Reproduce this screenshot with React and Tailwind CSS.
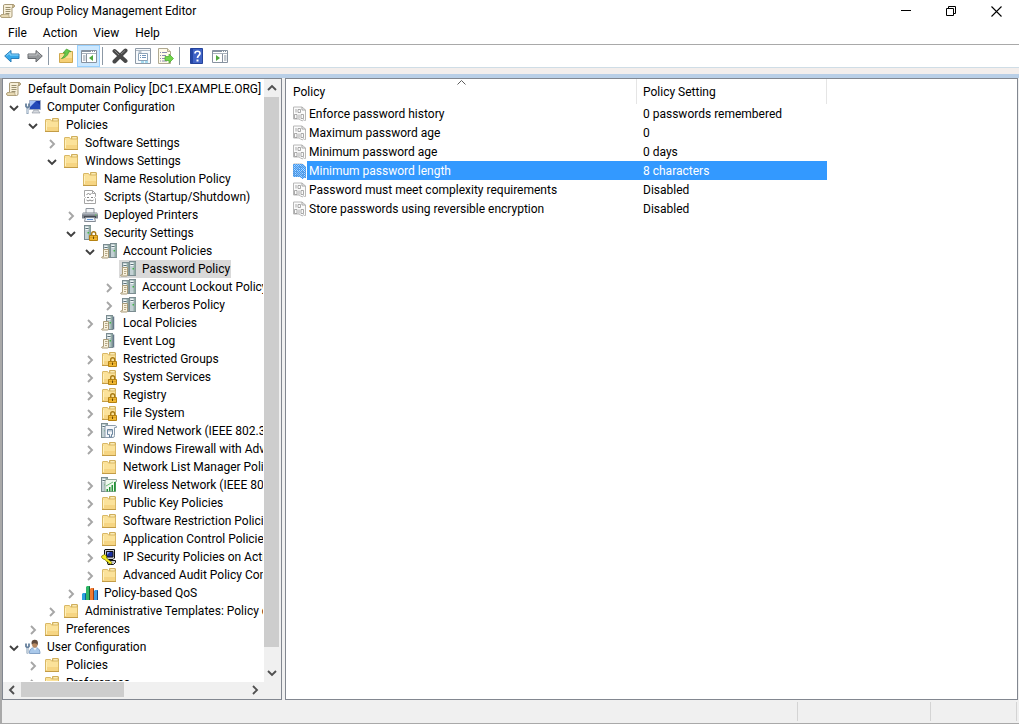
import React from "react";

const svgProps = { width: 16, height: 16, viewBox: "0 0 16 16", "aria-hidden": true, className: "block shrink-0" };

function ScrollIcon() {
  return (
    <svg {...svgProps}>
      <path d="M4.500 1.500h8.500q1.500.3 1.500 1.500T13 4.500h-1v8.500q0 1.500-1.500 1.500H2Q.5 14 .5 13T2 11.500h1.500V3q0-1.500 1-1.500z" fill="#f7efd8" stroke="#a89a78" />
      <path d="M12.500 1.500q2 .3 2 1.500t-2 1.500z" fill="#d5c397" stroke="#a3926c" strokeWidth=".6" />
      <path d="M2 11.500h7q-.8 1.500.7 3H2q-1.500-.5-1.500-1.500T2 11.500z" fill="#e6d8b2" stroke="#a3926c" strokeWidth=".6" />
      <path d="M5.500 4.500h5M5.500 6.500h5M5.500 8.500h5M5.500 10.500h4" stroke="#9a9070" strokeWidth="1" />
    </svg>
  );
}

function Folder() {
  return (
    <g>
      <path d="M8.500 1.500h5.500q.5 0 .5.500v11h-6z" fill="#f3dc91" stroke="#cfae5d" />
      <path d="M10 2.500h3v1h-3z" fill="#fff8dc" />
      <path d="M1.500 3q0-.5.5-.5h4.500l1 1.500h6.500q.5 0 .5.500v9.500q0 .5-.5.500h-12q-.5 0-.5-.5z" fill="#fbe29a" stroke="#d9b866" />
      <path d="M2 10h12v4H2z" fill="#f6d583" />
      <path d="M2.500 5v8" stroke="#fff1bd" />
      <path d="M1 14.500h14" stroke="#c39c46" />
    </g>
  );
}

function FolderIcon() {
  return <svg {...svgProps}><Folder /></svg>;
}

function Lock() {
  return (
    <g>
      <path d="M9.700 10V8.800a2 2 0 0 1 4 0V10" fill="none" stroke="#a87a14" strokeWidth="1.400" />
      <path d="M7.500 10.500h8v5h-8z" fill="#f0b833" stroke="#b58212" />
      <path d="M8 12.500h7" stroke="#d49a20" strokeWidth=".7" />
      <path d="M11 11.500h1v2.500h-1z" fill="#6b4a06" />
    </g>
  );
}

function FolderLockIcon() {
  return <svg {...svgProps}><Folder /><Lock /></svg>;
}

function Tower({ x = 0, y = 0, h = 13 }) {
  return (
    <g>
      <rect x={x + 0.5} y={y + 0.5} width="6" height={h} fill="#c3d1d4" stroke="#7b8c91" />
      <rect x={x + 4.5} y={y + 1} width="2" height={h - 1} fill="#93aca6" />
      <path d={`M${x + 1.5} ${y + 2.5}h3M${x + 1.5} ${y + 4.5}h3`} stroke="#f3f8f9" />
      <path d={`M${x + 1.5} ${y + 3.5}h3`} stroke="#5c7079" />
      <rect x={x + 3.5} y={y + 7} width="1.500" height="1.500" fill="#43b649" />
    </g>
  );
}

function Sheet() {
  return (
    <g>
      <path d="M2.500 6.500h5v7.500q0 1-1 1H1q-1-1 .5-1.500h1z" fill="#f9f2df" stroke="#a89a78" />
      <path d="M4 8.500h2.500M4 10.500h2.500M4 12.500h2" stroke="#a5966e" strokeWidth=".8" />
    </g>
  );
}

function ServersSheetIcon() {
  return <svg {...svgProps}><Tower x={2} y={1} h={13} /><Tower x={9} y={0} h={14} /><Sheet /></svg>;
}

function ServerSheetIcon() {
  return <svg {...svgProps}><Tower x={5} y={0} h={14} /><path d="M12.500 1.500v13" stroke="#65778a" strokeWidth="1.500" /><Sheet /></svg>;
}

function ServerLockIcon() {
  return <svg {...svgProps}><Tower x={2} y={0} h={14} /><Lock /></svg>;
}

function ComputerIcon() {
  return (
    <svg {...svgProps}>
      <path d="M4.500 1.500h11v9h-11z" fill="#2449b8" stroke="#a3aec6" />
      <path d="M5 2h6L5 8z" fill="#a7c2f5" />
      <path d="M11 2h4v4z" fill="#1733a0" />
      <path d="M9 11h4l2 3H7z" fill="#d5d9de" stroke="#8a929e" strokeWidth=".6" />
      <path d="M1 4.500v3L2.500 9 4 7.500v-3M2.500 8.500v6.500" fill="none" stroke="#66809d" strokeWidth="1.800" />
      <path d="M2.500 9.500v5" stroke="#e7f1fa" strokeWidth=".7" />
    </svg>
  );
}

function UserIcon() {
  return (
    <svg {...svgProps}>
      <path d="M4.500 14.500c-.5-4 2-6 5.500-6s5 2.500 5 6z" fill="#a9c8ea" stroke="#6e92bb" strokeWidth=".8" />
      <path d="M8 8.500l2 3 2-3z" fill="#eff6fc" />
      <ellipse cx="9.800" cy="5" rx="2.800" ry="3.800" fill="#b88a63" />
      <path d="M6.700 5.500C6 1.500 8 .8 10 .8c3 .3 3.300 2.500 2.500 5.500C12 4 9 3.500 6.700 5.500z" fill="#604b3d" />
      <path d="M1 4.500v3L2.500 9 4 7.500v-3M2.500 8.500v6" fill="none" stroke="#66809d" strokeWidth="1.800" />
      <path d="M2.500 9v5" stroke="#e2eef8" strokeWidth=".7" />
    </svg>
  );
}

function ScriptIcon() {
  return (
    <svg {...svgProps}>
      <path d="M2.500 1.500h8l3 3v3l-1 1 1 1v5h-11v-5l1-1-1-1z" fill="#fff" stroke="#a5a5a5" />
      <path d="M10.500 1.500v3h3" fill="none" stroke="#a5a5a5" />
      <path d="M4.500 5.500l2-1 1.500 1 1.500-1M5 8.500h2M9 8.500h2M4.500 11l1.500 1 2-1 2 1 1.500-1" fill="none" stroke="#777" strokeWidth=".9" />
    </svg>
  );
}

function PrinterIcon() {
  return (
    <svg {...svgProps}>
      <path d="M4 1.500h8v5H4z" fill="#f3f5f7" stroke="#8f969f" />
      <path d="M1 5.500h14l1 2v4H0v-4z" fill="#7d838c" />
      <path d="M1 6h14l.7 1.500H.3z" fill="#aeb4bc" />
      <path d="M2 9h12v2H2z" fill="#454a52" />
      <path d="M3.500 10.500h9l1 4h-11z" fill="#eef3fb" stroke="#858c95" />
      <path d="M5 12.500h6" stroke="#5c93d6" />
      <path d="M13 8h1.500" stroke="#65cf5b" />
    </svg>
  );
}

function WiredIcon() {
  return (
    <svg {...svgProps}>
      <Tower x={0} y={0} h={14} />
      <path d="M5 2.500h9.500q1 0 1 2h-2v8q0 2-1.500 2H4V4q0-1.500 1-1.500z" fill="#f4f7fa" stroke="#8c9cac" />
      <path d="M6.500 6.500v5h2v2.500h2v-2.500h1v-5zM8 6.500v2M10 6.500v2" fill="none" stroke="#5f7b96" strokeWidth=".9" />
    </svg>
  );
}

function WirelessIcon() {
  return (
    <svg {...svgProps}>
      <Tower x={0} y={0} h={14} />
      <path d="M5 2.500h10.500v2h-1v10H4V4z" fill="#eff8ee" stroke="#93a89c" />
      <path d="M5.500 12h1.500v2.500H5.500zM8 10h1.500v4.500H8zM10.500 8h1.500v6.500h-1.500zM13 5h1.700v9.500H13z" fill="#249338" />
      <path d="M5 9l7-4" fill="none" stroke="#6dbb78" />
    </svg>
  );
}

function IpSecIcon() {
  return (
    <svg {...svgProps}>
      <path d="M4 .5h9.500V9L12 10.500H5L3.500 9V1z" fill="#cfd0d8" stroke="#111" />
      <path d="M5.500 2.500h6.500v5.500H5.500z" fill="#1b2f9e" stroke="#111" />
      <path d="M6 3h3L6 6z" fill="#7f9cf0" />
      <path d="M6 11.500h8.500v2l-2 2H7z" fill="#c9cad2" stroke="#111" />
      <path d="M.7 7l2.800-1.500 2 1.500v2l5.500 4.500-1 1.700-2-.7-1-1.500-1.500-.5L4 10.500l-2-.5L.7 8.500z" fill="#f6ee21" stroke="#6a6500" strokeWidth=".7" />
    </svg>
  );
}

function QosIcon() {
  return (
    <svg {...svgProps}>
      <path d="M0 9l1-1h3v7H0z" fill="#2aa3df" /><path d="M3 9l1-1v7H3z" fill="#125c9c" />
      <path d="M4 2l1-1h3v14H4z" fill="#2eb867" /><path d="M7 2l1-1v14H7z" fill="#126034" />
      <path d="M8 4l1-1h3v12H8z" fill="#f07a2f" /><path d="M11 4l1-1v12h-1z" fill="#9b3a12" />
      <path d="M12 6l1-1h3v10h-4z" fill="#3e9ae0" /><path d="M15 6l1-1v10h-1z" fill="#154a8a" />
    </svg>
  );
}

function PolicyIcon({ selected }) {
  return (
    <svg width="14" height="16" viewBox="0 0 14 16" aria-hidden="true" className="block shrink-0">
      <defs>
        <pattern id="dither" width="2" height="2" patternUnits="userSpaceOnUse">
          <path d="M0 0h1v1H0zM1 1h1v1H1z" fill="#3399ff" />
        </pattern>
      </defs>
      <path d="M.5 1h8.500l3.500 3v10.500h-1l-1-1-1 1.500-2-1-1.500-1h-5.500z" fill="#fbfbfb" stroke="#b8b8b8" />
      <path d="M9 1v3h3.500" fill="none" stroke="#a5a5a5" />
      <path d="M3 3v3.500M5 3.500h2.500v3H5zM1.500 8.500h2.500v4H1.500zM6 8.500v4M8 8.500h2.500v4H8z" fill="none" stroke="#959595" strokeWidth=".8" />
      {selected && <path d="M0 1h10l3 3v11h-2l-1 1-3-2H0z" fill="#3399ff" fillOpacity=".35" />}
      {selected && <path d="M0 1h10l3 3v11h-2l-1 1-3-2H0z" fill="url(#dither)" shapeRendering="crispEdges" />}
    </svg>
  );
}

function Chevron({ dir, className }) {
  const d = { down: "M1 3l4 4 4-4", right: "M3 1l4 4-4 4", up: "M1 7l4-4 4 4", left: "M7 1L3 5l4 4" };
  return (
    <svg width="10" height="10" viewBox="0 0 10 10" aria-hidden="true" className={"block " + className}>
      <path d={d[dir]} fill="none" stroke="currentColor" strokeWidth="1.900" />
    </svg>
  );
}

const tree = [
  [0, "", ScrollIcon, "Default Domain Policy [DC1.EXAMPLE.ORG]"],
  [1, "open", ComputerIcon, "Computer Configuration"],
  [2, "open", FolderIcon, "Policies"],
  [3, "closed", FolderIcon, "Software Settings"],
  [3, "open", FolderIcon, "Windows Settings"],
  [4, "", FolderIcon, "Name Resolution Policy"],
  [4, "", ScriptIcon, "Scripts (Startup/Shutdown)"],
  [4, "closed", PrinterIcon, "Deployed Printers"],
  [4, "open", ServerLockIcon, "Security Settings"],
  [5, "open", ServersSheetIcon, "Account Policies"],
  [6, "", ServersSheetIcon, "Password Policy"],
  [6, "closed", ServersSheetIcon, "Account Lockout Policy"],
  [6, "closed", ServersSheetIcon, "Kerberos Policy"],
  [5, "closed", ServerSheetIcon, "Local Policies"],
  [5, "", ServerSheetIcon, "Event Log"],
  [5, "closed", FolderLockIcon, "Restricted Groups"],
  [5, "closed", FolderLockIcon, "System Services"],
  [5, "closed", FolderLockIcon, "Registry"],
  [5, "closed", FolderLockIcon, "File System"],
  [5, "closed", WiredIcon, "Wired Network (IEEE 802.3) Policies"],
  [5, "closed", FolderIcon, "Windows Firewall with Advanced Security"],
  [5, "", FolderIcon, "Network List Manager Policies"],
  [5, "closed", WirelessIcon, "Wireless Network (IEEE 802.11) Policies"],
  [5, "closed", FolderIcon, "Public Key Policies"],
  [5, "closed", FolderIcon, "Software Restriction Policies"],
  [5, "closed", FolderIcon, "Application Control Policies"],
  [5, "closed", IpSecIcon, "IP Security Policies on Active Directory"],
  [5, "closed", FolderIcon, "Advanced Audit Policy Configuration"],
  [4, "closed", QosIcon, "Policy-based QoS"],
  [3, "closed", FolderIcon, "Administrative Templates: Policy definitions"],
  [2, "closed", FolderIcon, "Preferences"],
  [1, "open", UserIcon, "User Configuration"],
  [2, "closed", FolderIcon, "Policies"],
  [2, "closed", FolderIcon, "Preferences"],
];

const policies = [
  ["Enforce password history", "0 passwords remembered"],
  ["Maximum password age", "0"],
  ["Minimum password age", "0 days"],
  ["Minimum password length", "8 characters"],
  ["Password must meet complexity requirements", "Disabled"],
  ["Store passwords using reversible encryption", "Disabled"],
];

function TreeRow({ depth, state, Icon, label }) {
  const selected = label === "Password Policy";
  return (
    <li
      role="treeitem"
      aria-level={depth + 1}
      aria-selected={selected}
      aria-expanded={state ? state === "open" : undefined}
      className="flex h-[18px] items-center whitespace-nowrap"
      style={{ paddingLeft: depth ? depth * 19 - 18 : 2 }}
    >
      {depth > 0 && (
        <span className="flex w-5 shrink-0 justify-center">
          {state && (
            <button type="button" aria-label={(state === "open" ? "Collapse " : "Expand ") + label} className="block pt-0.5">
              <Chevron dir={state === "open" ? "down" : "right"} className={state === "open" ? "text-[#404040]" : "text-[#a6a6a6]"} />
            </button>
          )}
        </span>
      )}
      <span className={"flex h-[18px] items-center gap-1.5 pr-px pl-px " + (selected ? "bg-[#d9d9d9]" : "")}>
        <Icon />
        <span>{label}</span>
      </span>
    </li>
  );
}

function Separator() {
  return <span className="mr-[5px] ml-0.5 h-[18px] w-px bg-[#8c98a5]" />;
}

function ConsoleWindow({ right }) {
  return (
    <svg width="16" height="16" viewBox="0 0 16 16" aria-hidden="true" className="block">
      <path d="M.5 2.500h15v12H.5z" fill="#fff" stroke="#8792a0" />
      <path d="M1 3.500h14" stroke="#8793a1" />
      <path d="M1 5.500h14" stroke="#a9b2bd" />
      <path d="M10 3.500h1M12 3.500h1M14 3.500h1" stroke="#fff" />
      <path d={right ? "M10.500 6v8" : "M5.500 6v8"} stroke="#8792a0" />
      <path d={right ? "M12 8h2.500M12 10h2.500M12 12h2.500" : "M2 8h2.500M2 10h2.500M2 12h2.500"} stroke="#8792a0" />
      <path d={right ? "M4 7v6l4-3z" : "M12 7v6l-4-3z"} fill="#4fa83d" />
    </svg>
  );
}

const toolGroups = [
  [
    ["Back", <svg width="16" height="16" viewBox="0 0 16 16" className="block"><path d="M.7 8l6.300-5.500V6H15v4.500H7V14z" fill="#35a7ea" stroke="#2a7db8" /><path d="M2.500 7.700L6 4.700V7h8.500" fill="none" stroke="#92d8fb" /></svg>],
    ["Forward", <svg width="16" height="16" viewBox="0 0 16 16" className="block"><path d="M15.300 8L9 2.500V6H1v4.500h8V14z" fill="#95989b" stroke="#66696d" /><path d="M1.500 7H10V4.700l3.500 3" fill="none" stroke="#c4c6c9" /></svg>],
  ],
  [
    ["Up one level", <svg width="16" height="16" viewBox="0 0 16 16" className="block"><path d="M1.500 5.500h6l1-2h6v11h-13z" fill="#fae095" stroke="#cfa84d" /><path d="M2 10h12v4H2z" fill="#f5cf75" /><path d="M3.500 10.500c2-1.500 3.500-3.500 3.500-6L5 5l3.500-4L13 3.500l-2.500.5C10.500 7 7 10 3.500 10.500z" fill="#6ac84b" stroke="#3f9c2d" strokeWidth=".7" /></svg>],
    ["Show console tree", <ConsoleWindow />],
  ],
  [
    ["Delete", <svg width="16" height="16" viewBox="0 0 16 16" className="block"><path d="M2.500 3L13.500 13M13.500 2.500L2.500 13.500" stroke="#484848" strokeWidth="4" strokeLinecap="round" /><path d="M2.500 2.500L7 7M13 2.500L9 6" stroke="#858585" strokeWidth="1" /></svg>],
    ["Properties", <svg width="16" height="16" viewBox="0 0 16 16" className="block"><path d="M.5.500h15v15H.5z" fill="#f6f9fc" stroke="#8f9aa7" /><path d="M1 2.500h14" stroke="#aab7c4" /><path d="M3.500 5.500h9v7h-9z" fill="#fff" stroke="#8da3b8" /><path d="M3.500 4h3" stroke="#7a8b9c" /><path d="M5 7.500h1M7 7.500h4M5 9.500h1M7 9.500h4" stroke="#6f93bb" /><path d="M6 14h3M10 14h3" stroke="#55bde4" /></svg>],
    ["Export list", <svg width="16" height="16" viewBox="0 0 16 16" className="block"><path d="M.5.500h9l3 3v12H.5z" fill="#fffbe9" stroke="#b0aa92" /><path d="M9.500.500v3h3" fill="#ece3bb" stroke="#b0aa92" /><path d="M2 4.500h1M4 4.500h5M2 7.500h1M4 7.500h4M2 10.500h1M4 10.500h3M2 13h1M4 13h5" stroke="#8a8ab0" /><path d="M7 8.500h4V6l4.500 4.500L11 15v-2.500H7z" fill="#6fd548" stroke="#47a82e" strokeWidth=".7" /></svg>],
  ],
  [
    ["Help", <svg width="14" height="16" viewBox="0 0 14 16" className="block"><path d="M.5.500h12v15H.5z" fill="#3f63c6" stroke="#24439b" /><path d="M1 1h2v14H1z" fill="#2445a5" /><path d="M5 5.500c0-3 5-3 5 0 0 2-2.500 2-2.500 4.500" fill="none" stroke="#fff" strokeWidth="1.700" /><path d="M6.500 11.500h2v2h-2z" fill="#fff" /></svg>],
    ["Show action pane", <ConsoleWindow right />],
  ],
];

function Toolbar() {
  return (
    <div role="toolbar" aria-label="Standard" className="flex h-[22px] shrink-0 items-center bg-white">
      {toolGroups.map((group, i) => (
        <React.Fragment key={i}>
          {i > 0 && <Separator />}
          <div className="flex items-center">
            {group.map(([name, icon]) => (
              <button
                key={name}
                type="button"
                aria-label={name}
                className={"flex h-[22px] w-[23px] items-center justify-center " + (name === "Show console tree" ? "border border-[#99d1ff] bg-[#cce8ff]" : "")}
              >
                {icon}
              </button>
            ))}
          </div>
        </React.Fragment>
      ))}
    </div>
  );
}

function TitleBar() {
  return (
    <header className="flex h-[22px] shrink-0 items-center bg-white">
      <ScrollIcon />
      <h1 className="flex-1 pl-[5px]">Group Policy Management Editor</h1>
      <div className="flex h-[18px] items-center">
        <button type="button" aria-label="Minimize" className="flex w-[45px] justify-center">
          <svg width="11" height="11" viewBox="0 0 11 11"><path d="M0 4.500h10" stroke="#000" /></svg>
        </button>
        <button type="button" aria-label="Restore" className="flex w-[45px] justify-center">
          <svg width="11" height="11" viewBox="0 0 11 11"><path d="M.5 2.500h7v7h-7zM2.500 2.500v-2h7v7h-2" fill="none" stroke="#000" /></svg>
        </button>
        <button type="button" aria-label="Close" className="flex w-[45px] justify-center">
          <svg width="11" height="11" viewBox="0 0 11 11"><path d="M.5.500l10 10M10.500.500l-10 10" stroke="#000" strokeWidth="1.100" /></svg>
        </button>
      </div>
    </header>
  );
}

function TreePane() {
  return (
    <nav aria-label="Console tree" className="flex w-[280px] shrink-0 flex-col border border-[#828790] bg-white">
      <div className="flex min-h-0 flex-1">
        <ul role="tree" className="min-w-0 flex-1 overflow-hidden border-r border-b border-white pt-px">
          {tree.map(([depth, state, Icon, label], i) => (
            <TreeRow key={i} depth={depth} state={state} Icon={Icon} label={label} />
          ))}
        </ul>
        <div className="flex w-[17px] flex-col bg-[#f0f0f0] pr-0.5">
          <button type="button" aria-label="Scroll up" className="flex h-[18px] items-center justify-center"><Chevron dir="up" className="text-[#505050]" /></button>
          <div className="flex-[32] bg-[#cdcdcd]" />
          <div className="flex-1" />
          <button type="button" aria-label="Scroll down" className="flex h-[18px] items-center justify-center"><Chevron dir="down" className="text-[#505050]" /></button>
        </div>
      </div>
      <div className="flex h-[17px] shrink-0 bg-[#f0f0f0] pr-[17px] pb-0.5">
        <button type="button" aria-label="Scroll left" className="flex w-[18px] items-center justify-center"><Chevron dir="left" className="text-[#505050]" /></button>
        <div className="w-[103px] bg-[#cdcdcd]" />
        <div className="flex-1" />
        <button type="button" aria-label="Scroll right" className="flex w-[18px] items-center justify-center"><Chevron dir="right" className="text-[#505050]" /></button>
      </div>
    </nav>
  );
}

function PolicyPane() {
  return (
    <main className="min-w-0 flex-1 overflow-hidden border border-[#828790] bg-white">
      <table className="w-[541px] table-fixed border-separate border-spacing-0 text-left">
        <colgroup>
          <col className="w-[351px]" />
          <col className="w-[190px]" />
        </colgroup>
        <thead>
          <tr className="h-[25px]">
            <th scope="col" aria-sort="ascending" className="relative border-r border-[#e5e5e5] p-0 pl-[7px] font-normal">
              Policy
              <svg width="9" height="5" viewBox="0 0 9 5" aria-hidden="true" className="absolute top-px left-1/2 -translate-x-1">
                <path d="M.5 4.500l4-4 4 4" fill="none" stroke="#5c5c5c" />
              </svg>
            </th>
            <th scope="col" className="border-r border-[#e5e5e5] p-0 pl-1.5 font-normal">Policy Setting</th>
          </tr>
        </thead>
        <tbody>
          {policies.map(([name, setting], i) => {
            const selected = i === 3;
            const fill = selected ? "bg-[#3399ff] text-white " : "";
            return (
              <tr key={name} aria-selected={selected} className="h-[19px]">
                <td className="p-0 pl-[7px]">
                  <span className="flex items-center">
                    <PolicyIcon selected={selected} />
                    <span className={"h-[19px] flex-1 pt-px pl-0.5 leading-[18px] " + fill}>{name}</span>
                  </span>
                </td>
                <td className={"p-0 pt-px pl-1.5 leading-[18px] " + fill}>{setting}</td>
              </tr>
            );
          })}
        </tbody>
      </table>
    </main>
  );
}

export default function App() {
  return (
    <div className="flex h-screen flex-col overflow-hidden bg-[#f0f0f0] font-['Roboto','Noto_Sans',sans-serif] text-[12px] leading-[18px] text-black">
      <TitleBar />
      <div role="menubar" className="flex h-[23px] shrink-0 items-center gap-4 border-b border-[#a9a9a9] bg-white pl-2">
        {["File", "Action", "View", "Help"].map((m) => (
          <button key={m} type="button" role="menuitem">{m}</button>
        ))}
      </div>
      <Toolbar />
      <div className="h-[7px] shrink-0 border-t border-[#cfdde6] bg-[#f3eeec]" />
      <div className="h-1 shrink-0 bg-[#b9cfe7]" />
      <div className="flex min-h-0 flex-1 gap-[3px] border-l-2 border-[#a9a9a9] pr-px">
        <TreePane />
        <PolicyPane />
      </div>
      <footer className="flex h-6 shrink-0 border-b border-l-2 border-[#a9a9a9] bg-[#f0f0f0] py-0.5 pr-0.5">
        <div className="flex-1 border-r border-[#d4d4d4]" />
        <div className="w-[133px] border-r border-[#d4d4d4]" />
        <div className="w-[86px] border-r border-[#d4d4d4]" />
      </footer>
    </div>
  );
}
